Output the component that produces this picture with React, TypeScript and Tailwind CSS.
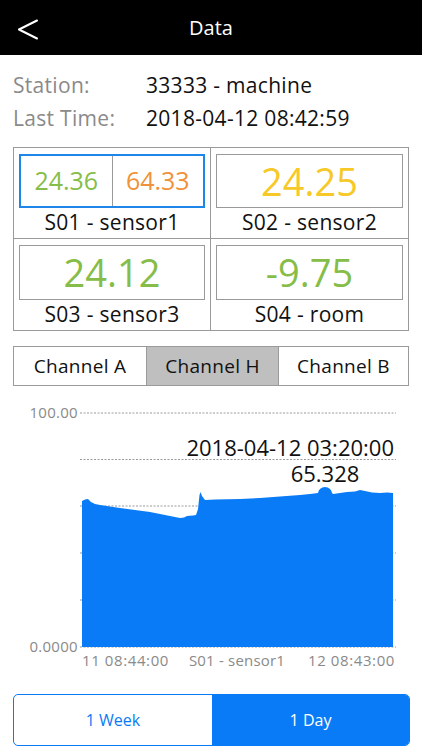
import React from "react";

const FONT = { fontFamily: "'Open Sans', 'Noto Sans', sans-serif" };

function Chart() {
  const grid = [412, 458.5, 505, 552, 599, 646];
  const area =
    "M82,646 L82,500 L85,498.5 L88,498 L91,501 L95,503 L100,504 L120,507 L150,511 L180,517 L184,516.5 L187,515 L193,514.5 L196,514 L198,508 L199.5,494 L200.5,491 L202,495 L205,499 L215,498.5 L240,498 L260,497 L280,495.5 L300,494 L310,493 L318,492 Q319,486.5 325,486 Q331,486.5 332,492 L333,493 L340,492 L347,491 L355,490.5 L360,489 L365,490 L372,491.5 L380,492 L387,491.5 L393,492 L393,646 Z";
  return (
    <svg width={422} height={290} viewBox="0 390 422 290" className="block" style={FONT}>
      {grid.map((y) => (
        <line key={y} x1={80} x2={396} y1={y} y2={y} stroke="#9a9a9a" strokeWidth={1} strokeDasharray="2 1.5" />
      ))}
      <path d={area} fill="#0a7bf6" />
      <text x={78} y={417} textAnchor="end" fontSize={15} letterSpacing={0.3} fill="#8a8a8a">100.00</text>
      <text x={78} y={651} textAnchor="end" fontSize={15} letterSpacing={0.3} fill="#8a8a8a">0.0000</text>
      <text x={394} y={455} textAnchor="end" fontSize={22} fill="#111">2018-04-12 03:20:00</text>
      <text x={325} y={481} textAnchor="middle" fontSize={22} fill="#111">65.328</text>
      <text x={82} y={665} fontSize={15} letterSpacing={0.6} fill="#8a8a8a">11 08:44:00</text>
      <text x={237} y={665} textAnchor="middle" fontSize={15} letterSpacing={0.2} fill="#8a8a8a">S01 - sensor1</text>
      <text x={395} y={665} textAnchor="end" fontSize={15} letterSpacing={0.6} fill="#8a8a8a">12 08:43:00</text>
    </svg>
  );
}

function Cell({ children, label, right, bottom }: { children: React.ReactNode; label: string; right?: boolean; bottom?: boolean }) {
  return (
    <div className={`flex flex-col pt-[6px] px-[5px] ${right ? "" : "border-r border-[#9a9a9a]"} ${bottom ? "" : "border-b border-[#9a9a9a]"}`}>
      {children}
      <div className="h-[30px] flex items-center justify-center text-[21px] tracking-[0.3px] text-[#111]">{label}</div>
    </div>
  );
}

export default function App() {
  return (
    <div className="w-[422px] h-[750px] bg-white overflow-hidden" style={FONT}>
      <div className="h-[55px] bg-black relative flex items-center justify-center">
        <svg className="absolute left-[17px] top-[19px]" width={22} height={22} viewBox="0 0 22 22">
          <polyline points="20,1.5 2,10.5 20,19.5" fill="none" stroke="white" strokeWidth={2} strokeLinecap="round" strokeLinejoin="round" />
        </svg>
        <span className="text-white text-[20px]">Data</span>
      </div>
      <div className="px-[13px] pt-[14px]">
        <div className="flex h-[33px] items-center text-[21px] tracking-[0.3px]">
          <span className="w-[133px] text-[#8a8a8a]">Station:</span>
          <span className="text-[#111]">33333 - machine</span>
        </div>
        <div className="flex h-[33px] items-center text-[21px] tracking-[0.3px]">
          <span className="w-[133px] text-[#8a8a8a]">Last Time:</span>
          <span className="text-[#111]">2018-04-12 08:42:59</span>
        </div>
        <div className="mt-[12px] grid grid-cols-2 grid-rows-[91px_91px] border border-[#9a9a9a] w-[396px]">
          <Cell label="S01 - sensor1">
            <div className="h-[55px] border-2 border-[#1e86e8] flex">
              <div className="flex-1 border-r border-[#9a9a9a] flex items-center justify-center text-[25px] text-[#86bd48]">24.36</div>
              <div className="flex-1 flex items-center justify-center text-[25px] text-[#f0923a]">64.33</div>
            </div>
          </Cell>
          <Cell label="S02 - sensor2" right>
            <div className="h-[54px] border border-[#9a9a9a] flex items-center justify-center text-[38px] text-[#f7c928]">24.25</div>
          </Cell>
          <Cell label="S03 - sensor3" bottom>
            <div className="h-[55px] border border-[#9a9a9a] flex items-center justify-center text-[38px] text-[#86bd48]">24.12</div>
          </Cell>
          <Cell label="S04 - room" right bottom>
            <div className="h-[55px] border border-[#9a9a9a] flex items-center justify-center text-[38px] text-[#86bd48]">-9.75</div>
          </Cell>
        </div>
        <div className="mt-[15px] h-[40px] w-[396px] border border-[#9a9a9a] flex text-[19px] tracking-[0.3px] text-[#111]">
          <div className="w-[133px] flex items-center justify-center border-r border-[#9a9a9a]">Channel A</div>
          <div className="w-[132px] flex items-center justify-center border-r border-[#9a9a9a] bg-[#bfbfbf]">Channel H</div>
          <div className="flex-1 flex items-center justify-center">Channel B</div>
        </div>
      </div>
      <div className="mt-[5px]">
        <Chart />
      </div>
      <div className="mx-[13px] mt-[13px] h-[52px] w-[397px] rounded-[5px] border-[1.5px] border-[#0a7bf6] flex overflow-hidden text-[16px]">
        <div className="w-[198px] flex items-center justify-center text-[#0a7bf6]">1 Week</div>
        <div className="flex-1 flex items-center justify-center bg-[#0a7bf6] text-white">1 Day</div>
      </div>
    </div>
  );
}
